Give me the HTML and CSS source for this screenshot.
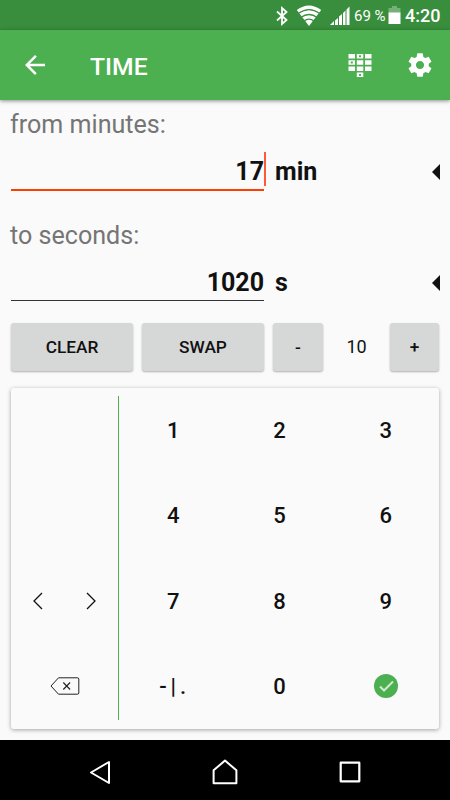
FILE: index.html
```html
<!DOCTYPE html>
<html lang="en">

<head>
    <meta charset="UTF-8">
    <meta name="viewport" content="width=device-width, initial-scale=1.0">
    <title>Time</title>
    <link rel="stylesheet" href="styles.css">
</head>

<body>
    <div class="status-bar">
        <svg class="bluetooth" width="12" height="20" viewBox="0 0 12 20">
            <path d="M1 5.500 10.500 14 6 18V2l4.500 4L1 14.500" fill="none" stroke="#fff" stroke-width="1.800" />
        </svg>
        <svg class="wifi" width="26" height="22" viewBox="0 0 26 22">
            <path d="M13 21 0.800 5Q13-4 25.200 5Z" fill="#fff" />
            <path d="M2.500 8.300Q13 1 23.500 8.300M5 12.300Q13 6.700 21 12.300M8 16Q13 12.400 18 16" fill="none" stroke="#388e3c" stroke-width="1.300" />
        </svg>
        <svg class="signal" width="20" height="20" viewBox="0 0 20 20">
            <path d="M0 19 4 15V19ZM5 14.500 8 12V19H5ZM9 10.500 12 8V19H9ZM13 7 15.500 4.500V19H13ZM16.500 3.500 19.500 0.500V19H16.500Z" fill="#fff" />
        </svg>
        <span class="percent">69 %</span>
        <svg class="battery" width="13" height="19" viewBox="0 0 13 19">
            <path d="M4 0H9V2H12.500V7H0.500V2H4Z" fill="#74b077" />
            <path d="M0.500 6.500H12.500V18H0.500Z" fill="#fff" />
        </svg>
        <span class="clock">4:20</span>
    </div>

    <header class="app-bar">
        <svg class="back" width="30" height="30" viewBox="0 0 24 24">
            <path d="M20 11H7.830l5.590-5.590L12 4l-8 8 8 8 1.410-1.410L7.830 13H20v-2z" fill="#fff" />
        </svg>
        <h1 class="title">TIME</h1>
        <svg class="keypad-icon" width="24" height="25" viewBox="0 0 24 25">
            <g fill="#fff">
                <path d="M0.500 1h6.500v4.500h-6.500zM8.800 1h6.500v4.500h-6.500zM17 1h6.500v4.500h-6.500z" />
                <path d="M0.500 7.200h6.500v4.500h-6.500zM8.800 7.200h6.500v4.500h-6.500zM17 7.200h6.500v4.500h-6.500z" />
                <path d="M0.500 13.400h6.500v4.500h-6.500zM8.800 13.400h6.500v4.500h-6.500zM17 13.400h6.500v4.500h-6.500zM8.800 19.600h6.500v4.500h-6.500z" />
            </g>
            <path d="M11 2.300h2v2h-2zM2.800 8.500h2v2h-2zM11 20.900h2v2h-2z" fill="#4caf50" />
        </svg>
        <svg class="settings" width="28" height="28" viewBox="0 0 24 24">
            <path d="M19.430 12.980c.04-.32.07-.64.07-.98s-.03-.66-.07-.98l2.110-1.650c.19-.15.24-.42.12-.64l-2-3.460c-.12-.22-.39-.3-.61-.22l-2.490 1c-.52-.4-1.080-.73-1.690-.98l-.38-2.650C14.460 2.180 14.250 2 14 2h-4c-.25 0-.46.18-.49.42l-.38 2.650c-.61.25-1.170.59-1.690.98l-2.490-1c-.23-.09-.49 0-.61.22l-2 3.460c-.13.22-.07.49.12.64l2.110 1.650c-.04.32-.07.65-.07.98s.03.66.07.98l-2.110 1.650c-.19.15-.24.42-.12.64l2 3.460c.12.22.39.3.61.22l2.490-1c.52.4 1.080.73 1.690.98l.38 2.650c.03.24.24.42.49.42h4c.25 0 .46-.18.49-.42l.38-2.650c.61-.25 1.170-.59 1.690-.98l2.490 1c.23.09.49 0 .61-.22l2-3.460c.12-.22.07-.49-.12-.64l-2.110-1.650zM12 15.500c-1.930 0-3.500-1.570-3.500-3.500s1.570-3.500 3.500-3.500 3.500 1.570 3.500 3.500-1.570 3.500-3.500 3.500z" fill="#fff" />
        </svg>
    </header>

    <main class="container">
        <div class="field">
            <div class="label">from minutes:</div>
            <div class="row">
                <div class="value active">17<span class="cursor"></span></div>
                <div class="unit">min</div>
                <span class="arrow"></span>
            </div>
        </div>
        <div class="field">
            <div class="label">to seconds:</div>
            <div class="row">
                <div class="value">1020</div>
                <div class="unit">s</div>
                <span class="arrow"></span>
            </div>
        </div>

        <div class="buttons">
            <button>CLEAR</button>
            <button>SWAP</button>
            <button>-</button>
            <span class="precision">10</span>
            <button>+</button>
        </div>

        <div class="keypad">
            <div class="side">
                <div class="move">
                    <svg width="10" height="18" viewBox="0 0 10 18">
                        <path d="M9 1 1 9l8 8" fill="none" stroke="#111" stroke-width="1.300" />
                    </svg>
                    <svg width="10" height="18" viewBox="0 0 10 18">
                        <path d="M1 1l8 8-8 8" fill="none" stroke="#111" stroke-width="1.300" />
                    </svg>
                </div>
                <div class="delete">
                    <svg width="30" height="18" viewBox="0 0 30 18">
                        <path d="M8.500 0.800H27.500Q28.800 0.800 28.800 2V16Q28.800 17.200 27.500 17.200H8.500L1 9Z" fill="none" stroke="#222" stroke-width="1" />
                        <path d="M13.300 5.500l6.800 7M20.100 5.500l-6.800 7" stroke="#222" stroke-width="1.100" />
                    </svg>
                </div>
            </div>
            <div class="divider"></div>
            <div class="keys">
                <div>1</div>
                <div>2</div>
                <div>3</div>
                <div>4</div>
                <div>5</div>
                <div>6</div>
                <div>7</div>
                <div>8</div>
                <div>9</div>
                <div class="sign">-|.</div>
                <div>0</div>
                <div>
                    <svg width="24" height="24" viewBox="0 0 24 24">
                        <circle cx="12" cy="12" r="12" fill="#4caf50" />
                        <path d="M6 12.500l4 4 9-9" fill="none" stroke="#cdeccf" stroke-width="2" />
                    </svg>
                </div>
            </div>
        </div>
    </main>

    <nav class="nav-bar">
        <svg width="22" height="25" viewBox="0 0 22 25">
            <path d="M20 2V23L2 12.500Z" fill="none" stroke="#fff" stroke-width="2" stroke-linejoin="round" />
        </svg>
        <svg width="26" height="26" viewBox="0 0 26 26">
            <path d="M1.600 24.300V11.300L13 1.600 24.400 11.300V24.300Z" fill="none" stroke="#fff" stroke-width="2" stroke-linejoin="round" />
        </svg>
        <svg width="22" height="22" viewBox="0 0 22 22">
            <path d="M1.700 1.700H20.300V20.300H1.700Z" fill="none" stroke="#fff" stroke-width="2.200" stroke-linejoin="round" />
        </svg>
    </nav>
</body>

</html>
```
FILE: styles.css
```css
* {
    margin: 0;
    padding: 0;
    box-sizing: border-box;
}

body {
    display: flex;
    flex-direction: column;
    width: 450px;
    height: 800px;
    background-color: #fafafa;
    color: #111;
    font-family: Roboto, "Liberation Sans", sans-serif;
    overflow: hidden;
}

svg {
    display: block;
    flex-shrink: 0;
}

.status-bar {
    display: flex;
    flex-shrink: 0;
    justify-content: flex-end;
    align-items: center;
    height: 30px;
    padding: 1px 10px 0 0;
    background-color: #388e3c;
    color: #fff;
}

.wifi {
    margin-left: 8px;
}

.signal {
    margin-left: 8px;
}

.percent {
    width: 31px;
    margin-left: 4px;
    font-size: 15px;
    white-space: nowrap;
}

.battery {
    margin-left: 3px;
}

.clock {
    width: 35px;
    margin-left: 4px;
    font-size: 18px;
    font-weight: 500;
    text-align: right;
}

.app-bar {
    display: flex;
    flex-shrink: 0;
    align-items: center;
    height: 70px;
    padding: 0 16px 0 20px;
    background-color: #4caf50;
    color: #fff;
    box-shadow: 0 1px 4px rgba(0, 0, 0, 0.45);
}

.title {
    flex: 1;
    margin-left: 40px;
    padding-top: 3px;
    font-size: 24.7px;
    font-weight: 500;
}

.settings {
    margin-left: 34px;
}

.container {
    flex: 1;
    padding: 10px 11px;
}

.field {
    height: 111px;
}

.label {
    height: 30px;
    margin-left: -1px;
    color: #757575;
    font-size: 25.1px;
    line-height: 30px;
}

.row {
    display: flex;
    height: 51px;
    font-size: 25px;
    font-weight: 700;
    line-height: 63px;
}

.value {
    position: relative;
    width: 253px;
    height: 50px;
    border-bottom: 1px solid #333;
    text-align: right;
}

.active {
    height: 51px;
    border-bottom: 2px solid #ff3d00;
}

.cursor {
    position: absolute;
    right: -2px;
    bottom: 3px;
    width: 2px;
    height: 34px;
    background-color: #ff5a35;
}

.unit {
    flex: 1;
    margin-left: 11px;
}

.arrow {
    align-self: flex-start;
    margin: 24px -1px 0 0;
    border: 8px solid transparent;
    border-right-color: #111;
    border-left: 0;
}

.buttons {
    display: grid;
    grid-template-columns: 122px 122px 50px 49px 49px;
    column-gap: 9px;
    height: 47px;
    margin-top: -9px;
}

.buttons button {
    border: 0;
    border-radius: 3px;
    background-color: #d6d8d7;
    color: #111;
    font-family: inherit;
    font-size: 17.3px;
    font-weight: 500;
    box-shadow: 0 1px 2px rgba(0, 0, 0, 0.3);
}

.precision {
    font-size: 18px;
    line-height: 48px;
    text-align: center;
}

.keypad {
    display: flex;
    height: 341px;
    margin-top: 18px;
    border-radius: 3px;
    background-color: #fafafa;
    box-shadow: 0 1px 4px rgba(0, 0, 0, 0.35);
}

.side {
    display: flex;
    flex-direction: column;
    justify-content: flex-end;
    width: 107px;
}

.move,
.delete {
    display: flex;
    justify-content: space-around;
    align-items: center;
    height: 25%;
}

.divider {
    width: 1px;
    margin: 8px 0 9px;
    background-color: #4caf50;
}

.keys {
    display: grid;
    flex: 1;
    grid-template-columns: repeat(3, 1fr);
    grid-template-rows: repeat(4, 1fr);
    place-items: center;
    padding-left: 1px;
    font-size: 22px;
    font-weight: 500;
}

.sign {
    padding-left: 3px;
    letter-spacing: 4px;
}

.nav-bar {
    display: flex;
    flex-shrink: 0;
    justify-content: space-between;
    align-items: center;
    height: 60px;
    padding: 4px 89px 0;
    background-color: #000;
}
```
